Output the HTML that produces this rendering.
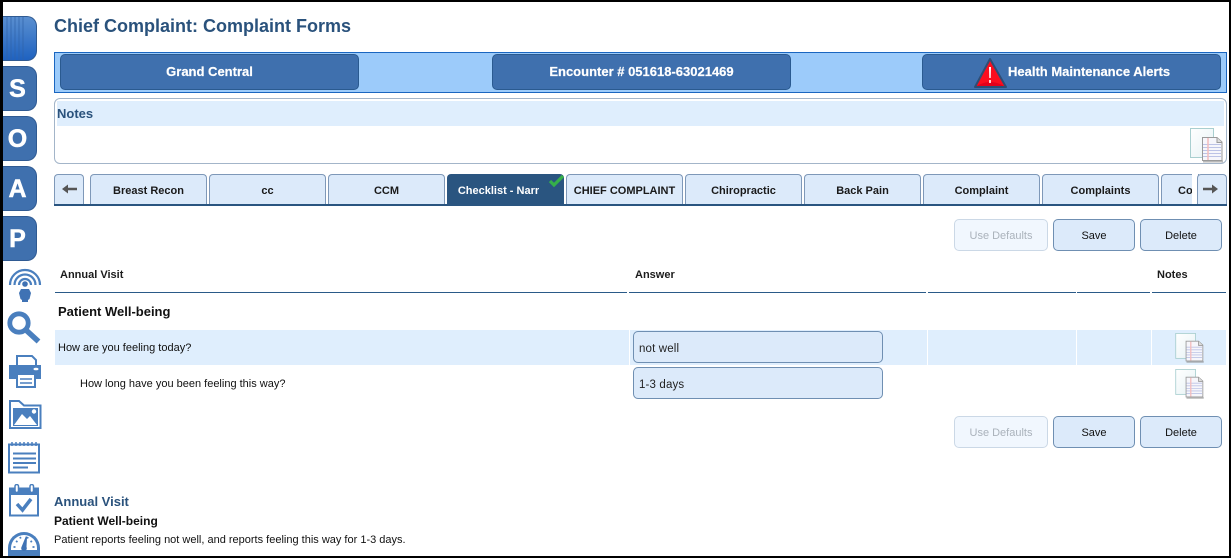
<!DOCTYPE html>
<html><head><meta charset="utf-8"><style>
html,body{margin:0;padding:0;background:#fff}
#p{position:relative;width:1231px;height:558px;overflow:hidden;background:#fff;font-family:"Liberation Sans",sans-serif;color:#111}
#p div,#p svg{position:absolute;box-sizing:border-box}
.b{background:#000}
.s{left:3px;width:34px;height:45px;background:#3f70ae;border:1px solid #2f5a92;border-left:0;border-radius:0 10px 10px 0;color:#fff;font:bold 25px/44px "Liberation Sans",sans-serif;text-align:center;padding-right:4px;-webkit-text-stroke:.5px #fff}
.hb{top:54px;height:36px;background:#3f70ae;border:1px solid #2a5a90;border-radius:5px;color:#fff;font:bold 13px/34px "Liberation Sans",sans-serif;text-align:center;-webkit-text-stroke:.2px #fff}
.tab{top:174px;height:30px;width:117px;background:#dceafa;border:1px solid #7e98b8;border-bottom:0;border-radius:4px 4px 0 0;font:bold 11px/32px "Liberation Sans",sans-serif;text-align:center;color:#1a1a1a;white-space:nowrap;overflow:hidden}
.btn{width:82px;height:32px;background:#dceafa;border:1px solid #6f8fb2;border-radius:5px;font:11px/32px "Liberation Sans",sans-serif;text-align:center;color:#111}
.dis{width:94px;left:954px;background:#f1f7fe;border-color:#cbd8e6;color:#aab2bb}
.th{top:269px;font:bold 11px/13px "Liberation Sans",sans-serif;color:#1c1c1c;white-space:nowrap}
.line{top:292px;height:1px;background:#2a5a88}
.inp{left:633px;width:250px;height:32px;background:#dceafa;border:1px solid #6f8fb2;border-radius:5px;font:11.500px/35px "Liberation Sans",sans-serif;padding-left:5px;color:#222;letter-spacing:.15px}
.t{white-space:nowrap}
</style></head><body><div id="p">

<svg width="0" height="0" style="position:absolute"><defs>
<linearGradient id="sq" x1="0" y1="0" x2="1" y2="1"><stop offset="0" stop-color="#fff"/><stop offset="1" stop-color="#e6f2f4"/></linearGradient>
<g id="note">
<rect x="0.500" y="0.500" width="23" height="29" fill="url(#sq)" stroke="#a9cfd0"/>
<path d="M13 33.500H33" stroke="#8a8a8a" stroke-width="2" opacity=".6"/>
<path d="M12.500 9.500H27L32 14V32.500H12.500Z" fill="#f6f6fb" stroke="#9a9a9a" stroke-width="1"/>
<path d="M27 9.500V14.500H32" fill="#ddd" stroke="#9a9a9a" stroke-width="1"/>
<path d="M13 16.500H31M13 19.500H31M13 22.500H31M13 25.500H31M13 28.500H31" stroke="#bcc3e6" stroke-width="1"/>
<path d="M18 10V32" stroke="#f4bcbc" stroke-width="1.500"/>
</g></defs></svg>

<div style="left:3px;top:16px;width:34px;height:45px;border-radius:0 10px 10px 0;border:1px solid #2f5a92;border-left:0;background:linear-gradient(#5a8fd0,#1f62c0)"></div>
<svg style="left:3px;top:17px" width="22" height="43"><path d="M4 0V43M8 0V43M12 0V43M16 0V43M20 0V43" stroke="#2f62a8" stroke-width="1" opacity=".7"/></svg>
<div class="s" style="top:66px">S</div>
<div class="s" style="top:116px">O</div>
<div class="s" style="top:166px">A</div>
<div class="s" style="top:216px">P</div>

<!-- signal person -->
<svg style="left:8px;top:268px" width="34" height="36" fill="none" stroke="#4a7fbe" stroke-width="2.200">
<path d="M2 17A15 15 0 0 1 32 17M6.500 17A10.500 10.500 0 0 1 27.500 17M11 17A6 6 0 0 1 23 17"/>
<circle cx="17" cy="16" r="2.800" fill="#3f72b4" stroke="none"/>
<path d="M13 21H21L23 25L21.500 31L20 32V34H14V32L12.500 31L11 25Z" fill="#3f72b4" stroke="none"/></svg>
<!-- magnifier -->
<svg style="left:7px;top:310px" width="35" height="36" fill="none" stroke="#4a7fbe">
<circle cx="12" cy="13" r="9.200" stroke-width="4.800"/><path d="M19.500 20.500L31.500 31.500" stroke-width="5.500"/></svg>
<!-- printer -->
<svg style="left:8px;top:354px" width="36" height="34">
<path d="M9 2H24L28 6V12H9Z" fill="#fff" stroke="#4a7fbe" stroke-width="2"/>
<path d="M1 11H33V25H1Z" fill="#4a7fbe"/>
<ellipse cx="28" cy="15" rx="2.500" ry="1.300" fill="#fff"/>
<rect x="9" y="20" width="18" height="13" fill="#fff" stroke="#4a7fbe" stroke-width="2"/>
<path d="M12 25H24M12 29H24" stroke="#4a7fbe" stroke-width="1.500"/></svg>
<!-- folder -->
<svg style="left:9px;top:399px" width="33" height="30">
<path d="M1 2H10L15 6.500H31.500V29H1Z" fill="none" stroke="#4a7fbe" stroke-width="2"/>
<rect x="4" y="9" width="25" height="18" fill="#4a7fbe"/>
<path d="M5 26L13 15L18 20L21 17L28 26Z" fill="#fff"/><circle cx="25" cy="12.500" r="2.200" fill="#fff"/></svg>
<!-- notepad -->
<svg style="left:8px;top:441px" width="33" height="33" fill="none" stroke="#4a7fbe">
<rect x="1" y="3.500" width="30" height="28" stroke-width="2"/>
<path d="M4 1V5M8 1V5M12 1V5M16 1V5M20 1V5M24 1V5M28 1V5" stroke-width="1.500"/>
<path d="M5 12.500H28M5 17.500H28M5 22H28M5 26.500H20" stroke-width="2"/></svg>
<!-- calendar -->
<svg style="left:9px;top:484px" width="31" height="33" fill="none" stroke="#4a7fbe">
<rect x="1" y="4.500" width="28" height="27" stroke-width="2"/><rect x="1" y="4.500" width="28" height="6" fill="#4a7fbe"/>
<rect x="6" y="0.500" width="3.500" height="8" rx="1.700" fill="#fff" stroke-width="1.500"/><rect x="21" y="0.500" width="3.500" height="8" rx="1.700" fill="#fff" stroke-width="1.500"/>
<path d="M8 20L13.500 26L22 15" stroke-width="3.500"/></svg>
<!-- gauge -->
<svg style="left:8px;top:532px" width="33" height="24">
<path d="M0 24V16A16 16 0 0 1 32 16V24Z" fill="#4a7fbe"/>
<path d="M3 18V16A13 13 0 0 1 29 16V18Z" fill="#fff"/>
<path d="M5.500 15H7.500M24.500 15H26.500M8 9L9.500 10M24 9L22.500 10M12 5L12.800 6.500M20 5L19.200 6.500" stroke="#4a7fbe" stroke-width="1.800"/>
<path d="M18 4L19 5L18.500 15A2.800 2.800 0 1 1 13.500 15Z" fill="#3f72b4"/></svg>

<div class="t" style="left:54px;top:16px;font:bold 18px/21px 'Liberation Sans',sans-serif;color:#2a527c">Chief Complaint: Complaint Forms</div>

<div style="left:54px;top:52px;width:1173px;height:41px;background:#9ccbfa;border:1px solid #1a66c0"></div>
<div class="hb" style="left:60px;width:299px">Grand Central</div>
<div class="hb" style="left:492px;width:299px">Encounter # 051618-63021469</div>
<div class="hb" style="left:922px;width:299px;text-align:left;padding-left:85px">Health Maintenance Alerts</div>
<svg style="left:973px;top:57px" width="35" height="32">
<path d="M17 2L33 30H2Z" fill="#fb0d1e" stroke="#2f4d75" stroke-width="2" stroke-linejoin="round"/>
<path d="M4 29Q17 21 31 29Z" fill="#e4001a"/>
<path d="M16 10H18L17.700 21H16.300ZM16.200 23H17.800V26H16.200Z" fill="#fff"/></svg>

<div style="left:54px;top:98px;width:1173px;height:66px;border:1px solid #a3b5c9;border-radius:6px;background:#fff"></div>
<div style="left:57px;top:101px;width:1167px;height:25px;background:#dfeefd"></div>
<div class="t" style="left:57px;top:106px;font:bold 13px/15px 'Liberation Sans',sans-serif;color:#2a527c">Notes</div>
<svg style="left:1190px;top:128px" width="33" height="36" viewBox="0 0 33 36"><use href="#note"/></svg>

<div style="left:54px;top:204px;width:1173px;height:2px;background:#2a5580"></div>
<div class="tab" style="left:54px;width:30px"></div>
<svg style="left:62px;top:184px" width="15" height="10"><path d="M0 5L6 0.500V3.800H15V6.200H6V9.500Z" fill="#555"/></svg>
<div class="tab" style="left:90px">Breast Recon</div>
<div class="tab" style="left:209px">cc</div>
<div class="tab" style="left:328px">CCM</div>
<div class="tab" style="left:447px;background:#2a5580;border-color:#2a5580;color:#fff;padding-right:14px">Checklist - Narr</div>
<svg style="left:548px;top:174px" width="17" height="14"><path d="M2 7L6 11L15 2" fill="none" stroke="#35b04a" stroke-width="3.200"/></svg>
<div class="tab" style="left:566px">CHIEF COMPLAINT</div>
<div class="tab" style="left:685px">Chiropractic</div>
<div class="tab" style="left:804px">Back Pain</div>
<div class="tab" style="left:923px">Complaint</div>
<div class="tab" style="left:1042px">Complaints</div>
<div class="tab" style="left:1161px;width:38px;text-align:left;padding-left:16px;border-right:0;border-radius:4px 0 0 0">Co</div>
<div style="left:1192px;top:174px;width:6px;height:30px;background:#fff"></div>
<div class="tab" style="left:1197px;width:30px"></div>
<svg style="left:1203px;top:184px" width="15" height="10"><path d="M15 5L9 0.500V3.800H0V6.200H9V9.500Z" fill="#555"/></svg>

<div class="btn dis" style="top:219px">Use Defaults</div>
<div class="btn" style="left:1053px;top:219px">Save</div>
<div class="btn" style="left:1140px;top:219px">Delete</div>

<div class="th" style="left:60px">Annual Visit</div>
<div class="th" style="left:635px">Answer</div>
<div class="th" style="left:1157px">Notes</div>
<div class="line" style="left:55px;width:572px"></div>
<div class="line" style="left:629px;width:297px"></div>
<div class="line" style="left:928px;width:148px"></div>
<div class="line" style="left:1077px;width:73px"></div>
<div class="line" style="left:1152px;width:74px"></div>

<div class="t" style="left:58px;top:304px;font:bold 13px/16px 'Liberation Sans',sans-serif;color:#111">Patient Well-being</div>

<div style="left:55px;top:330px;width:1171px;height:35px;background:#dfeefd"></div>
<div style="left:629px;top:330px;width:1px;height:35px;background:#fff"></div>
<div style="left:927px;top:330px;width:1px;height:35px;background:#fff"></div>
<div style="left:1076px;top:330px;width:1px;height:35px;background:#fff"></div>
<div style="left:1151px;top:330px;width:1px;height:35px;background:#fff"></div>
<div class="t" style="left:58px;top:342px;font:11px/13px 'Liberation Sans',sans-serif">How are you feeling today?</div>
<div class="t" style="left:80px;top:378px;font:11px/13px 'Liberation Sans',sans-serif">How long have you been feeling this way?</div>
<div class="inp" style="top:331px">not well</div>
<div class="inp" style="top:367px">1-3 days</div>
<svg style="left:1175px;top:333px" width="29" height="31" viewBox="0 0 33 36"><use href="#note"/></svg>
<svg style="left:1175px;top:369px" width="29" height="31" viewBox="0 0 33 36"><use href="#note"/></svg>

<div class="btn dis" style="top:416px">Use Defaults</div>
<div class="btn" style="left:1053px;top:416px">Save</div>
<div class="btn" style="left:1140px;top:416px">Delete</div>

<div class="t" style="left:54px;top:494px;font:bold 13px/15px 'Liberation Sans',sans-serif;color:#2a527c">Annual Visit</div>
<div class="t" style="left:54px;top:514px;font:bold 12px/14px 'Liberation Sans',sans-serif;color:#111">Patient Well-being</div>
<div class="t" style="left:54px;top:533px;font:11px/14px 'Liberation Sans',sans-serif;color:#111">Patient reports feeling not well, and reports feeling this way for 1-3 days.</div>

<div class="b" style="left:0;top:0;width:1231px;height:2px"></div>
<div class="b" style="left:0;top:0;width:3px;height:558px"></div>
<div class="b" style="left:1229px;top:0;width:2px;height:558px"></div>
<div class="b" style="left:0;top:556px;width:1231px;height:2px"></div>
</div></body></html>
